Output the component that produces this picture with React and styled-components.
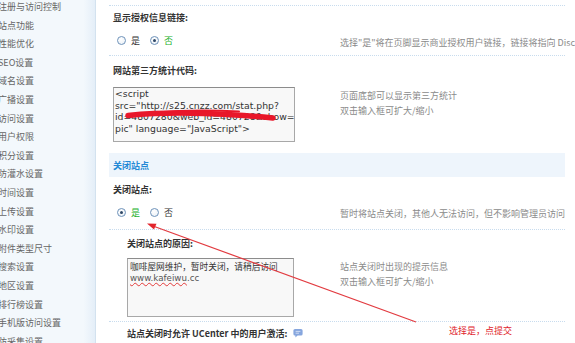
import React from "react";
import styled, { createGlobalStyle } from "styled-components";

const GlobalStyle = createGlobalStyle`
  html, body {
    margin: 0;
    padding: 0;
    background: #fff;
  }
  body {
    font-family: "Noto Sans CJK SC", "DejaVu Sans", sans-serif;
    overflow: hidden;
  }
`;

const Page = styled.div`
  position: relative;
  display: flex;
  width: 575px;
  height: 343px;
  overflow: hidden;
`;

const Sidebar = styled.div`
  width: 95px;
  flex: none;
  overflow: hidden;
  background: linear-gradient(to right, #f3f8fc 0, #f3f8fc 88%, #e4eef8 100%);
  border-right: 1px solid #d3e2ef;
`;

const SideList = styled.ul`
  list-style: none;
  margin: -2px 0 0 -2px;
  padding: 0;
`;

const SideItem = styled.li`
  height: 18.6px;
  line-height: 18.6px;
  font-size: 9px;
  color: #666;
  white-space: nowrap;
`;

const Main = styled.div`
  flex: 1;
  min-width: 0;
  padding: 5px 10px 0 13px;
`;

const Sep = styled.div`
  border-top: 1px dotted #c8dcee;
  margin-top: ${(p) => p.$mt || 0}px;
`;

const LabelRow = styled.div`
  display: flex;
  align-items: center;
  gap: 6px;
  height: ${(p) => p.$h}px;
  padding-left: ${(p) => (p.$indent ? 18 : 4)}px;
  font-size: 9px;
  font-weight: bold;
  color: #333;
  white-space: nowrap;
`;

const OptionRow = styled.div`
  display: flex;
  align-items: center;
  height: ${(p) => p.$h}px;
  margin-bottom: ${(p) => p.$mb || 0}px;
  padding-left: 4px;
`;

const LeftCell = styled.div`
  flex: none;
  width: ${(p) => p.$w}px;
  display: flex;
  align-items: center;
  padding-left: ${(p) => p.$pl || 0}px;
  box-sizing: border-box;
`;

const Desc = styled.div`
  font-size: 9px;
  line-height: 15px;
  color: #8a8a8a;
  white-space: nowrap;
  padding-top: ${(p) => p.$pt || 0}px;
`;

const RadioItem = styled.label`
  display: inline-flex;
  align-items: center;
  gap: 5px;
  margin-right: 10px;
  font-size: 9px;
  color: ${(p) => (p.$checked ? "#22b02a" : "#333")};
`;

const Circle = styled.span`
  position: relative;
  width: 9px;
  height: 9px;
  box-sizing: border-box;
  border-radius: 50%;
  border: 1px solid #6f93ba;
  background: radial-gradient(circle at 40% 35%, #fff 0, #eef3f8 70%, #d9e3ee 100%);

  &::after {
    content: "";
    display: ${(p) => (p.$checked ? "block" : "none")};
    position: absolute;
    left: 2px;
    top: 2px;
    width: 3px;
    height: 3px;
    border-radius: 50%;
    background: #2e4766;
  }
`;

const TextRow = styled.div`
  display: flex;
  align-items: flex-start;
  margin-top: ${(p) => p.$mt || 0}px;
  padding-left: ${(p) => (p.$indent ? 18 : 4)}px;
`;

const TextBox = styled.div`
  position: relative;
  width: ${(p) => p.$w}px;
  height: ${(p) => p.$h}px;
  box-sizing: border-box;
  border: 1px solid #a8a8a8;
  border-top-color: #8c8c8c;
  background: #f8f8f8;
  color: #333;
  overflow: hidden;
  white-space: pre;
`;

const CodeText = styled.div`
  font-family: "DejaVu Sans", sans-serif;
  font-size: 9.3px;
  line-height: 11.7px;
  padding: 0 0 0 1px;
`;

const PlainText = styled.div`
  font-size: 8.7px;
  line-height: 11px;
  padding: 2px 0 0 2px;
  color: #333;
`;

const UrlPart = styled.span`
  font-family: "DejaVu Sans", sans-serif;
  color: #555;
  text-decoration: ${(p) => (p.$wavy ? "underline wavy #e23a3a" : "none")};
  text-decoration-thickness: 1px;
  text-underline-offset: 1px;
`;

const Scribble = styled.svg`
  position: absolute;
  left: 0;
  top: 0;
  pointer-events: none;
`;

const SectionBand = styled.div`
  display: flex;
  align-items: center;
  height: 24px;
  margin-top: 11px;
  padding-left: 4px;
  background: #eef5fc;
  color: #2489d6;
  font-size: 9px;
  font-weight: bold;
`;

const Overlay = styled.svg`
  position: absolute;
  left: 0;
  top: 0;
  pointer-events: none;
`;

const Note = styled.div`
  position: absolute;
  left: 449px;
  top: 324px;
  font-size: 9px;
  color: #e0242c;
  white-space: nowrap;
`;

const menu = [
  "注册与访问控制",
  "站点功能",
  "性能优化",
  "SEO设置",
  "域名设置",
  "广播设置",
  "访问设置",
  "用户权限",
  "积分设置",
  "防灌水设置",
  "时间设置",
  "上传设置",
  "水印设置",
  "附件类型尺寸",
  "搜索设置",
  "地区设置",
  "排行榜设置",
  "手机版访问设置",
  "防采集设置",
];

function Radios({ value }) {
  return (
    <>
      <RadioItem $checked={value === "yes"}>
        <Circle $checked={value === "yes"} />是
      </RadioItem>
      <RadioItem $checked={value === "no"}>
        <Circle $checked={value === "no"} />否
      </RadioItem>
    </>
  );
}

function Bubble() {
  return (
    <svg width="10" height="10" viewBox="0 0 10 10">
      <path
        d="M2 1h6a1.6 1.6 0 0 1 1.6 1.6v3.4A1.6 1.6 0 0 1 8 7.6H4.6L2.4 9.6V7.6H2A1.6 1.6 0 0 1 0.4 6V2.6A1.6 1.6 0 0 1 2 1z"
        fill="#86a6de"
      />
      <path d="M2.6 3.4h4.8M2.6 5.2h3.4" stroke="#dfe8f8" strokeWidth="0.8" />
    </svg>
  );
}

export default function App() {
  return (
    <>
      <GlobalStyle />
      <Page>
        <Sidebar>
          <SideList>
            {menu.map((m) => (
              <SideItem key={m}>{m}</SideItem>
            ))}
          </SideList>
        </Sidebar>

        <Main>
          <Sep />
          <LabelRow $h={22}>显示授权信息链接:</LabelRow>
          <OptionRow $h={24} $mb={3}>
            <LeftCell $w={227} $pl={4}>
              <Radios value="no" />
            </LeftCell>
            <Desc $pt={4}>选择"是"将在页脚显示商业授权用户链接，链接将指向 Discuz! 官方网站</Desc>
          </OptionRow>
          <Sep />
          <LabelRow $h={28}>网站第三方统计代码:</LabelRow>
          <TextRow $mt={3}>
            <LeftCell $w={227}>
              <TextBox $w={182} $h={55}>
                <CodeText>
                  {'<script\nsrc="http://s25.cnzz.com/stat.php?\nid=4807280&web_id=480728&show=\npic" language="JavaScript">'}
                </CodeText>
                <Scribble width="182" height="55">
                  <path
                    d="M14 27.5 C35 25.5, 60 24.5, 90 25.5 S140 28, 159 30"
                    stroke="#e8172a"
                    strokeWidth="5.5"
                    fill="none"
                    strokeLinecap="round"
                  />
                  <path
                    d="M42 24.5 Q80 21 125 23.5"
                    stroke="#e8172a"
                    strokeWidth="2"
                    fill="none"
                    strokeLinecap="round"
                  />
                </Scribble>
              </TextBox>
            </LeftCell>
            <Desc $pt={1}>
              页面底部可以显示第三方统计
              <br />
              双击输入框可扩大/缩小
            </Desc>
          </TextRow>

          <SectionBand>关闭站点</SectionBand>
          <LabelRow $h={25}>关闭站点:</LabelRow>
          <OptionRow $h={21} $mb={6}>
            <LeftCell $w={227} $pl={4}>
              <Radios value="yes" />
            </LeftCell>
            <Desc $pt={2}>暂时将站点关闭，其他人无法访问，但不影响管理员访问</Desc>
          </OptionRow>
          <Sep />
          <LabelRow $h={26} $indent>
            关闭站点的原因:
          </LabelRow>
          <TextRow $mt={2} $indent>
            <LeftCell $w={213}>
              <TextBox $w={167} $h={59}>
                <PlainText>
                  咖啡屋网维护，暂时关闭，请稍后访问
                  {"\n"}
                  <UrlPart $wavy>www.kafeiwu</UrlPart>
                  <UrlPart>.cc</UrlPart>
                </PlainText>
              </TextBox>
            </LeftCell>
            <Desc $pt={1}>
              站点关闭时出现的提示信息
              <br />
              双击输入框可扩大/缩小
            </Desc>
          </TextRow>
          <Sep $mt={4} />
          <LabelRow $h={22} $indent>
            站点关闭时允许 UCenter 中的用户激活:
            <Bubble />
          </LabelRow>
        </Main>

        <Overlay width="575" height="343">
          <line x1="416" y1="322" x2="153" y2="226" stroke="#e23b40" strokeWidth="1.2" />
          <path d="M147 223.5 L156.5 223.8 L154 229.6 Z" fill="#e2242c" />
        </Overlay>
        <Note>选择是，点提交</Note>
      </Page>
    </>
  );
}
